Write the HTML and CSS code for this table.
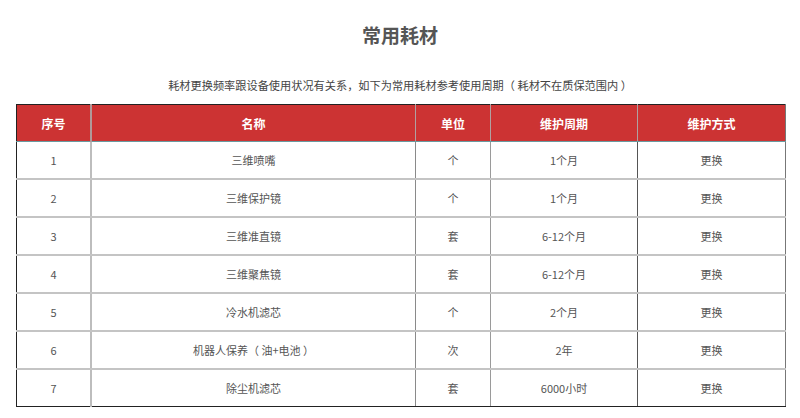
FILE: index.html
```html
<!DOCTYPE html>
<html lang="zh">
<head>
<meta charset="utf-8">
<link rel="stylesheet" href="styles.css">
</head>
<body>
<h1 class="title">常用耗材</h1>
<p class="intro">耗材更换频率跟设备使用状况有关系，如下为常用耗材参考使用周期（ 耗材不在质保范围内 ）</p>
<table class="grid">
  <thead>
    <tr><th class="c1">序号</th><th class="c2">名称</th><th class="c3">单位</th><th class="c4">维护周期</th><th class="c5">维护方式</th></tr>
  </thead>
  <tbody>
    <tr><td class="c1">1</td><td class="c2">三维喷嘴</td><td class="c3">个</td><td class="c4">1个月</td><td class="c5">更换</td></tr>
    <tr><td class="c1">2</td><td class="c2">三维保护镜</td><td class="c3">个</td><td class="c4">1个月</td><td class="c5">更换</td></tr>
    <tr><td class="c1">3</td><td class="c2">三维准直镜</td><td class="c3">套</td><td class="c4">6-12个月</td><td class="c5">更换</td></tr>
    <tr><td class="c1">4</td><td class="c2">三维聚焦镜</td><td class="c3">套</td><td class="c4">6-12个月</td><td class="c5">更换</td></tr>
    <tr><td class="c1">5</td><td class="c2">冷水机滤芯</td><td class="c3">个</td><td class="c4">2个月</td><td class="c5">更换</td></tr>
    <tr><td class="c1">6</td><td class="c2">机器人保养（ 油+电池 ）</td><td class="c3">次</td><td class="c4">2年</td><td class="c5">更换</td></tr>
    <tr><td class="c1">7</td><td class="c2">除尘机滤芯</td><td class="c3">套</td><td class="c4">6000小时</td><td class="c5">更换</td></tr>
  </tbody>
</table>
</body>
</html>
```

FILE: styles.css
```css
html, body {
  margin: 0;
  padding: 0;
  background: #ffffff;
}
body {
  font-family: "Noto Sans CJK SC", "Microsoft YaHei", "Noto Sans", sans-serif;
  color: #555555;
}
.title {
  margin: 0;
  padding-top: 23px;
  font-size: 19px;
  line-height: 24px;
  font-weight: bold;
  text-align: center;
  color: #555555;
}
.intro {
  margin: 30px 0 0 0;
  font-size: 11.2px;
  line-height: 16px;
  text-align: center;
  color: #444444;
}
.grid {
  margin: 11px 0 0 16px;
  width: 770px;
  border-collapse: collapse;
  table-layout: fixed;
  border-top: 1px solid #222222;
  border-left: 1px solid #222222;
  border-bottom: 1px solid #222222;
  border-right: 1px solid #777777;
}
.grid th {
  background: #cc3333;
  color: #ffffff;
  font-size: 12px;
  font-weight: bold;
  height: 36px;
  padding: 0;
  text-align: center;
  border-right: 1px solid #b0a0a0;
  border-bottom: 1px solid #6a9aa0;
}
.grid td {
  font-size: 11px;
  color: #555555;
  height: 36px;
  padding: 0;
  text-align: center;
  border-bottom: 2px solid #c4c4c4;
}
.grid tbody tr:last-child td {
  border-bottom: 1px solid #222222;
}
.grid .c1 { width: 73px; }
.grid .c2 { width: 323px; }
.grid .c3 { width: 74px; }
.grid .c4 { width: 146px; }
.grid td.c1 { border-right: 2px solid #bdbdbd; }
.grid td.c2 { border-right: 1px solid #8a8a8a; }
.grid td.c3 { border-right: 1px solid #9a9a9a; }
.grid td.c4 { border-right: 1px solid #555555; }
.grid th.c1 { border-right: 2px solid #b09a9a; }
.grid th.c5 { border-right: 1px solid #777777; }
```
